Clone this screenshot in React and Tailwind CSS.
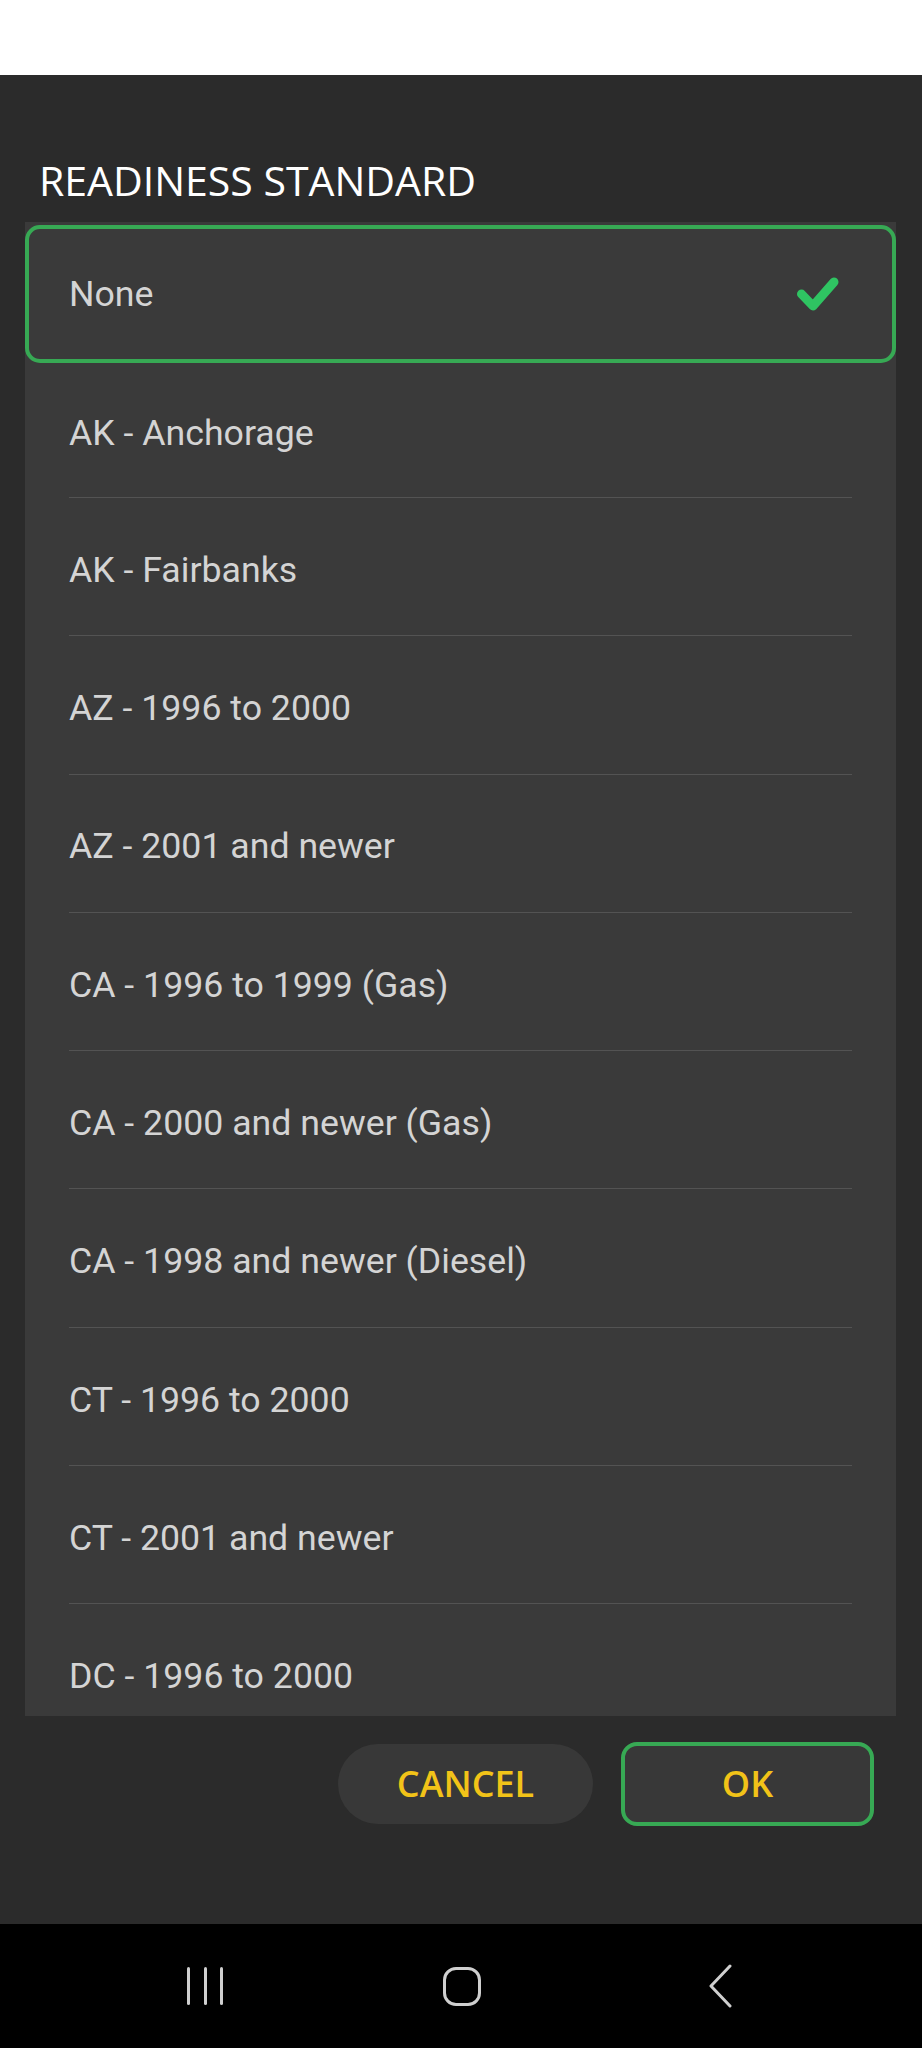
const items = [
  "AK - Anchorage",
  "AK - Fairbanks",
  "AZ - 1996 to 2000",
  "AZ - 2001 and newer",
  "CA - 1996 to 1999 (Gas)",
  "CA - 2000 and newer (Gas)",
  "CA - 1998 and newer (Diesel)",
  "CT - 1996 to 2000",
  "CT - 2001 and newer",
  "DC - 1996 to 2000",
];

const Check = () => (
  <svg width="44" height="38" viewBox="0 0 44 38" fill="none">
    <path
      d="M5.5 19 L17 31 L38 7"
      stroke="#2fc462"
      strokeWidth="9"
      strokeLinecap="round"
      strokeLinejoin="round"
    />
  </svg>
);

const NavBar = () => (
  <div className="h-[124px] bg-black flex items-center">
    <div className="w-[922px] flex items-center h-full">
      {/* recents */}
      <div className="ml-[187px] flex gap-[13.5px] items-center">
        <span className="block w-[3px] h-[38px] rounded-full bg-[#cfcfcf]"></span>
        <span className="block w-[3px] h-[38px] rounded-full bg-[#cfcfcf]"></span>
        <span className="block w-[3px] h-[38px] rounded-full bg-[#cfcfcf]"></span>
      </div>
      {/* home */}
      <div className="ml-[220px] w-[38px] h-[39px] rounded-[13px] border-[3.5px] border-[#cfcfcf]"></div>
      {/* back */}
      <svg className="ml-[227px]" width="26" height="44" viewBox="0 0 26 44" fill="none">
        <path
          d="M22 2 L3 22 L22 42"
          stroke="#cfcfcf"
          strokeWidth="3"
          strokeLinecap="round"
          strokeLinejoin="round"
        />
      </svg>
    </div>
  </div>
);

const App = () => {
  return (
    <div className="w-[922px] h-[2048px] flex flex-col bg-white overflow-hidden">
      {/* ------------------ top white strip ------------------ */}
      <div className="h-[75px] bg-white"></div>

      {/* ------------------ dialog ------------------ */}
      <div className="flex-1 bg-[#2b2b2b] flex flex-col">
        <h2
          className="mt-[85px] ml-[39px] text-[41px] leading-none text-white"
          style={{ fontFamily: '"Open Sans", "Noto Sans", sans-serif' }}
        >
          READINESS STANDARD
        </h2>

        <div
          className="mt-[21px] ml-[25px] mr-[26px] h-[1494px] overflow-hidden bg-[#3a3a3a] pt-[3px]"
          style={{ fontFamily: 'Roboto, "Liberation Sans", sans-serif' }}
        >
          {/* selected */}
          <div className="h-[138px] border-4 border-[#37a954] rounded-[15px] flex items-center justify-between pl-[40px] pr-[52px]">
            <span className="text-[35.7px] text-[#d4d4d4] pt-[2px]">None</span>
            <Check />
          </div>

          {items.map((label, i) => (
            <div
              key={label}
              className={`flex flex-col ${i === 0 ? "h-[135px]" : "h-[138.3px]"}`}
            >
              <div className="flex-1 flex items-center pt-[8px] px-[44px]">
                <span className="text-[35.7px] text-[#d4d4d4] whitespace-nowrap">
                  {label}
                </span>
              </div>
              <div className="mx-[44px] h-px bg-[#535353]"></div>
            </div>
          ))}
        </div>

        {/* ------------------ buttons ------------------ */}
        <div
          className="mt-[26px] flex justify-end items-center gap-[28px] pr-[48px]"
          style={{ fontFamily: '"Open Sans", "Noto Sans", sans-serif' }}
        >
          <button className="w-[255px] h-[80px] rounded-full bg-[#383838] text-[#f2c318] text-[36px] font-semibold leading-none">
            CANCEL
          </button>
          <button className="w-[253px] h-[84px] rounded-[16px] border-4 border-[#37a954] bg-[#383838] text-[#f2c318] text-[36px] font-semibold leading-none">
            OK
          </button>
        </div>
      </div>

      <NavBar />
    </div>
  );
};

export default App;
